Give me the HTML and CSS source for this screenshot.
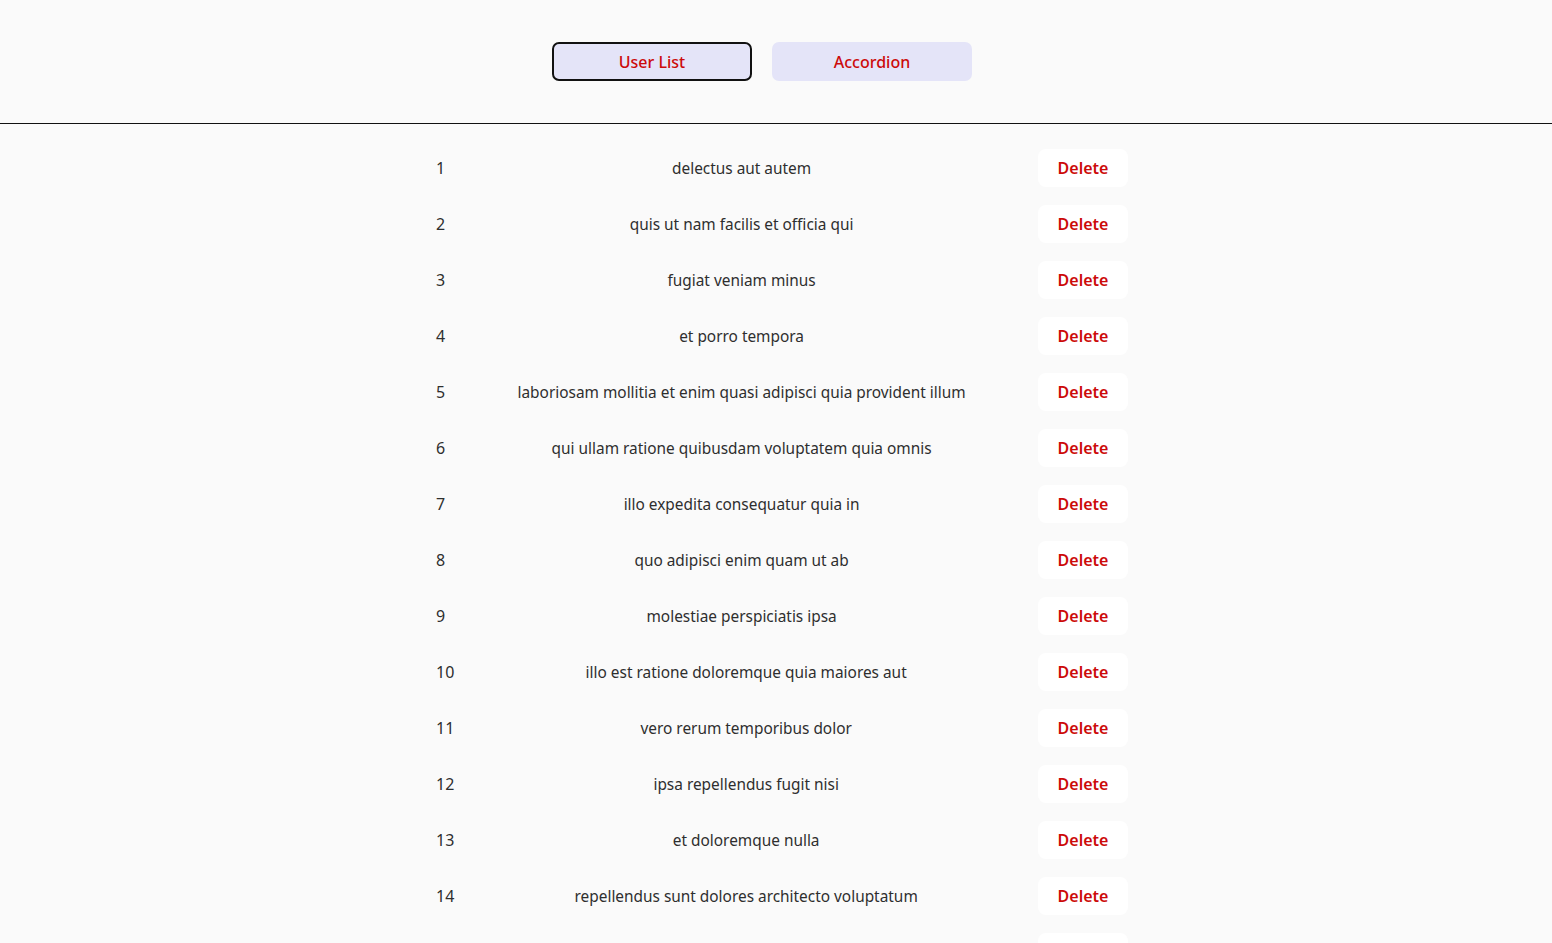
FILE: index.html
```html
<!DOCTYPE html>
<html>
<head>
<meta charset="utf-8">
<link rel="stylesheet" href="styles.css">
</head>
<body>
<header class="nav">
  <button class="tab tab-active">User List</button>
  <button class="tab">Accordion</button>
</header>
<main class="list">
  <div class="row"><span class="num">1</span><span class="title">delectus aut autem</span><button class="del">Delete</button></div>
  <div class="row"><span class="num">2</span><span class="title">quis ut nam facilis et officia qui</span><button class="del">Delete</button></div>
  <div class="row"><span class="num">3</span><span class="title">fugiat veniam minus</span><button class="del">Delete</button></div>
  <div class="row"><span class="num">4</span><span class="title">et porro tempora</span><button class="del">Delete</button></div>
  <div class="row"><span class="num">5</span><span class="title">laboriosam mollitia et enim quasi adipisci quia provident illum</span><button class="del">Delete</button></div>
  <div class="row"><span class="num">6</span><span class="title">qui ullam ratione quibusdam voluptatem quia omnis</span><button class="del">Delete</button></div>
  <div class="row"><span class="num">7</span><span class="title">illo expedita consequatur quia in</span><button class="del">Delete</button></div>
  <div class="row"><span class="num">8</span><span class="title">quo adipisci enim quam ut ab</span><button class="del">Delete</button></div>
  <div class="row"><span class="num">9</span><span class="title">molestiae perspiciatis ipsa</span><button class="del">Delete</button></div>
  <div class="row"><span class="num">10</span><span class="title">illo est ratione doloremque quia maiores aut</span><button class="del">Delete</button></div>
  <div class="row"><span class="num">11</span><span class="title">vero rerum temporibus dolor</span><button class="del">Delete</button></div>
  <div class="row"><span class="num">12</span><span class="title">ipsa repellendus fugit nisi</span><button class="del">Delete</button></div>
  <div class="row"><span class="num">13</span><span class="title">et doloremque nulla</span><button class="del">Delete</button></div>
  <div class="row"><span class="num">14</span><span class="title">repellendus sunt dolores architecto voluptatum</span><button class="del">Delete</button></div>
  <div class="row"><span class="num">15</span><span class="title">ab voluptatum amet voluptas</span><button class="del">Delete</button></div>
</main>
</body>
</html>
```
FILE: styles.css
```css
html, body {
  margin: 0;
  padding: 0;
  background: #fafafa;
  font-family: "Noto Sans", "Open Sans", sans-serif;
  color: #2e2e2e;
}

.nav {
  display: flex;
  justify-content: center;
  gap: 20px;
  padding: 42px 28px 42px 0;
  border-bottom: 1px solid #111;
}

.tab {
  width: 200px;
  height: 39px;
  border: 2px solid transparent;
  border-radius: 7px;
  background: #e4e4f8;
  color: #cc0a0a;
  font-family: inherit;
  font-size: 16px;
  font-weight: 500;
  cursor: pointer;
}

.tab-active {
  border-color: #111;
}

.list {
  width: 692px;
  margin-left: calc(50% - 340px);
  padding-top: 16px;
  display: flex;
  flex-direction: column;
}

.row {
  display: flex;
  align-items: center;
  height: 56px;
  font-size: 16px;
}

.num {
  flex: none;
}

.title {
  flex: 1;
  text-align: center;
  font-size: 15.4px;
}

.del {
  flex: none;
  width: 90px;
  height: 38px;
  border: none;
  border-radius: 8px;
  background: #fff;
  color: #cc0a0a;
  font-family: inherit;
  font-size: 16px;
  font-weight: 600;
  cursor: pointer;
}
```
